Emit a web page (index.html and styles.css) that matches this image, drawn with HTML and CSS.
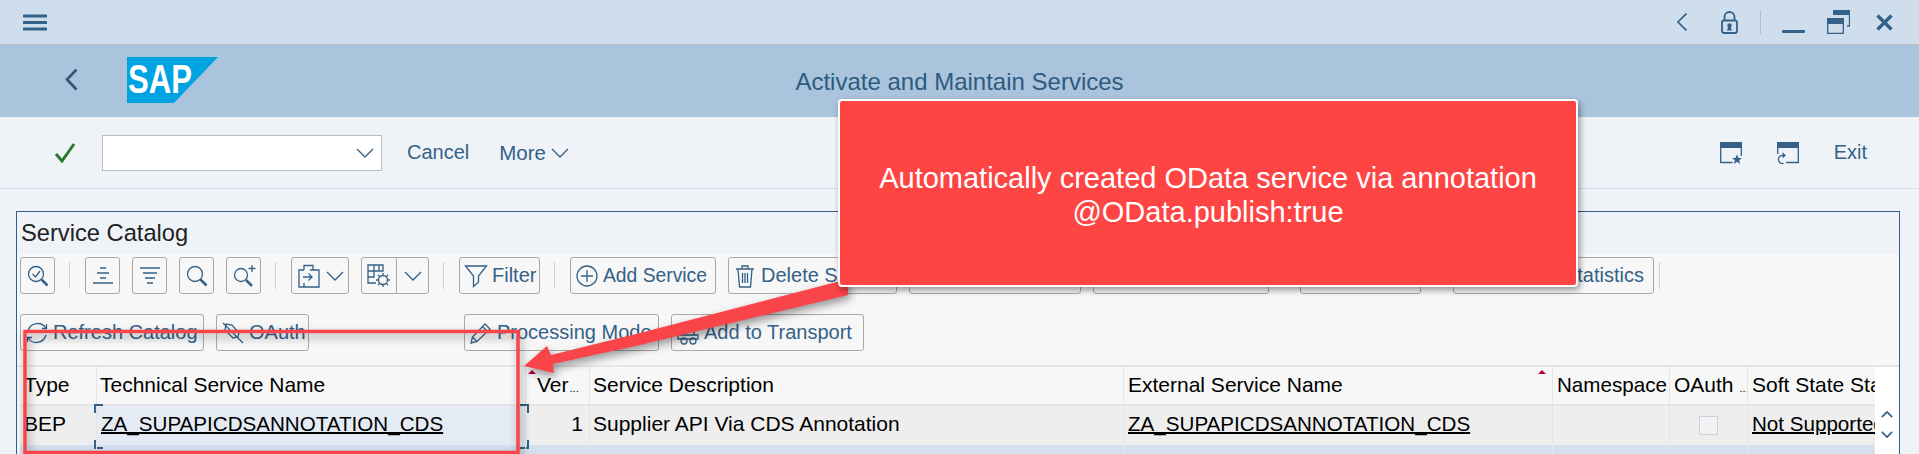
FILE: index.html
```html
<!DOCTYPE html>
<html lang="en">
<head>
    <meta charset="UTF-8">
    <title>Activate and Maintain Services</title>
    <link rel="stylesheet" href="styles.css">
</head>
<body>
    <div class="topbar">
        <svg class="ic-menu" viewBox="0 0 24 17"><path d="M1 2h22M1 8.500h22M1 15h22"/></svg>
        <div class="topbar-right">
            <svg class="ic-top-back" viewBox="0 0 10 18"><path d="M9.500 .5 1 9l8.500 8.500"/></svg>
            <svg class="ic-lock" viewBox="0 0 17 23"><path class="ln" d="M3.500 9.500V6a5 5 0 0 1 10 0v3.500"/><rect class="ln" x="1" y="9.500" width="15" height="12.500" rx="2"/><circle class="fl" cx="8.500" cy="14.500" r="2.200"/><path class="fl" d="M6 19.500h5l-1.500-4h-2z"/></svg>
            <span class="top-sep"></span>
            <svg class="ic-min" viewBox="0 0 23 3"><rect width="23" height="3" rx="1"/></svg>
            <svg class="ic-restore" viewBox="0 0 23 24"><path class="fl" d="M6 0h17v5H6z"/><path class="ln" d="M22.500 4v12H20"/><path class="fl" d="M0 8h17v6H0z"/><path class="ln" d="M.7 13v10.300h15.600V13"/></svg>
            <svg class="ic-close" viewBox="0 0 17 17"><path d="M1.500 1.500l14 14M15.500 1.500l-14 14"/></svg>
        </div>
    </div>

    <header class="titlebar">
        <div class="title-left">
            <svg class="ic-back" viewBox="0 0 13 23"><path d="M11.500 1.500 2 11.500l9.500 10"/></svg>
            <svg class="sap-logo" viewBox="0 0 91 46">
                <polygon points="0,0 91,0 47,46 0,46"/>
                <text x="1" y="36" textLength="64" lengthAdjust="spacingAndGlyphs">SAP</text>
            </svg>
        </div>
        <h1>Activate and Maintain Services</h1>
    </header>

    <div class="cmdbar">
        <svg class="ic-check" viewBox="0 0 22 20"><path d="M2 11l6 7L20 1"/></svg>
        <div class="combo">
            <svg class="chev" viewBox="0 0 18 10"><path d="M1 1l8 8 8-8"/></svg>
        </div>
        <a class="cmd cmd-cancel">Cancel</a>
        <a class="cmd cmd-more">More<svg class="chev" viewBox="0 0 18 10"><path d="M1 1l8 8 8-8"/></svg></a>
        <div class="cmdbar-right">
            <svg class="ic-win" viewBox="0 0 22 22"><path class="fl" d="M0 0h22v6H0z"/><path class="ln" d="M.7 5v15.500h12M21.300 5v9"/><path class="fl" d="M17 12.500l1.500 3.500h3.500l-2.800 2.300 1 3.700-3.200-2.200-3.200 2.200 1-3.700-2.800-2.300h3.500z"/></svg>
            <svg class="ic-win" viewBox="0 0 22 22"><path class="fl" d="M0 0h22v6H0z"/><path class="ln" d="M.7 5v7M21.300 5v15.500H9"/><path class="ln" d="M6.500 21.300A4 4 0 1 1 6 13.500h2M5.500 11l2.500 2.500-2.500 2"/></svg>
            <a class="cmd">Exit</a>
        </div>
    </div>

    <section class="panel">
        <div class="panel-title">Service Catalog</div>
        <div class="tools">
            <div class="tool-row">
                <button class="btn btn-ic"><svg viewBox="0 0 24 24"><circle cx="10" cy="10" r="7.500"/><path d="M6.500 10l3 3 4.500-6"/><path class="thick" d="M15.500 15.500l6 6"/></svg></button>
                <span class="sep"></span>
                <button class="btn btn-ic"><svg viewBox="0 0 24 24"><path d="M9 4h6M6 9h12M9 14h6M2 19h20"/></svg></button>
                <button class="btn btn-ic"><svg viewBox="0 0 24 24"><path d="M2 4h20M5 9h14M7 14h10M9 19h6"/></svg></button>
                <button class="btn btn-ic"><svg viewBox="0 0 24 24"><circle cx="10" cy="10" r="7.500"/><path class="thick" d="M15.500 15.500l6 6"/></svg></button>
                <button class="btn btn-ic"><svg viewBox="0 0 24 24"><circle cx="9" cy="11" r="6.500"/><path class="thick" d="M14 16l6 6"/><path d="M20 1v7M16.500 4.500h7"/></svg></button>
                <span class="sep"></span>
                <button class="btn btn-export"><svg viewBox="0 0 24 24"><path d="M7 6V1.500h9V6M7 19v4M7 6H2v17h5M13 6h9v17H7"/><path d="M6 13h9M11.500 9.500l3.500 3.500-3.500 3.500"/></svg><svg class="chev" viewBox="0 0 18 10"><path d="M1 1l8 8 8-8"/></svg></button>
                <div class="btn btn-split">
                    <span class="split-l"><svg viewBox="0 0 24 24"><path d="M1 1h15v6H1zM1 7h6v6H1zM7 1v6M12 1v6M1 13v6h8"/><circle cx="16" cy="16" r="4.500"/><path d="M16 9v2.500M16 20.500V23M9 16h2.500M20.500 16H23M11 11l1.800 1.800M19.200 19.200l1.800 1.800M11 21l1.800-1.800M19.200 12.800L21 11"/></svg></span>
                    <span class="split-r"><svg class="chev" viewBox="0 0 18 10"><path d="M1 1l8 8 8-8"/></svg></span>
                </div>
                <span class="sep"></span>
                <button class="btn btn-filter"><svg viewBox="0 0 24 24"><path d="M1.500 2h21l-8 10v6l-5 4.500V12z"/></svg>Filter</button>
                <span class="sep"></span>
                <button class="btn btn-add"><svg viewBox="0 0 24 24"><circle cx="12" cy="12" r="10"/><path d="M12 6v12M6 12h12"/></svg>Add Service</button>
                <button class="btn btn-delete"><svg viewBox="0 0 24 24"><path d="M3 5h18M9 5V2h6v3M5 5l1.500 18h11L19 5M9.500 9v10M12 9v10M14.500 9v10"/></svg>Delete Service</button>
                <button class="btn btn-w172"></button>
                <button class="btn btn-w176"></button>
                <button class="btn btn-w121"></button>
                <button class="btn btn-stats">Gateway Statistics</button>
                <span class="sep sep-tight"></span>
            </div>
            <div class="tool-row">
                <button class="btn btn-refresh"><svg viewBox="0 0 24 24"><path d="M3 10A10 10 0 0 1 21 7M21 14A10 10 0 0 1 3 17M17 7.500h4.500V3M7 16.500H2.500V21"/></svg>Refresh Catalog</button>
                <button class="btn btn-oauth"><svg viewBox="0 0 24 24"><path d="M2 2l20 20"/><path d="M5 3l-1 6 8 8 5-1 1-4-7-8z"/></svg>OAuth</button>
                <button class="btn btn-proc"><svg viewBox="0 0 24 24"><path d="M2 22l1.500-6L16 3l5 5L8 20.500zM3.500 16l4.500 4.500M13.500 5.500l5 5"/></svg>Processing Mode</button>
                <button class="btn btn-transport"><svg viewBox="0 0 24 24"><path d="M6 8h12v6H6zM2 14h20v4H2zM6 8l2-5h8l2 5"/><circle cx="8" cy="20" r="3"/><circle cx="17" cy="20" r="3"/></svg>Add to Transport</button>
            </div>
        </div>

        <div class="grid">
            <div class="row row-head">
                <div class="cell">Type</div>
                <div class="cell cell-tech">Technical Service Name</div>
                <div class="cell cell-ver">Ver<span class="dots">...</span><i class="sort sort-a"></i></div>
                <div class="cell cell-desc">Service Description</div>
                <div class="cell cell-ext">External Service Name<i class="sort sort-b"></i></div>
                <div class="cell cell-ns">Namespace</div>
                <div class="cell cell-oauth">OAuth<span class="dots">...</span></div>
                <div class="cell cell-soft">Soft State Status</div>
            </div>
            <div class="row row-data">
                <div class="cell">BEP</div>
                <div class="cell cell-focus"><a class="link">ZA_SUPAPICDSANNOTATION_CDS</a><i class="br br-tl"></i><i class="br br-tr"></i><i class="br br-bl"></i><i class="br br-br"></i></div>
                <div class="cell cell-num">1</div>
                <div class="cell cell-desc">Supplier API Via CDS Annotation</div>
                <div class="cell cell-ext"><a class="link">ZA_SUPAPICDSANNOTATION_CDS</a></div>
                <div class="cell"></div>
                <div class="cell cell-chk"><span class="chk"></span></div>
                <div class="cell cell-soft"><a class="link">Not Supported</a></div>
            </div>
            <div class="row row-sel">
                <div class="cell"></div><div class="cell"></div><div class="cell"></div><div class="cell"></div>
                <div class="cell"></div><div class="cell"></div><div class="cell"></div><div class="cell"></div>
            </div>
            <div class="vscroll">
                <svg viewBox="0 0 14 8"><path d="M1 7l6-6 6 6"/></svg>
                <svg viewBox="0 0 14 8"><path d="M1 1l6 6 6-6"/></svg>
            </div>
        </div>
    </section>

    <!-- callout drawn over the screen -->
    <svg class="markup" viewBox="0 0 1919 454">
        <rect x="25" y="331.500" width="493" height="121" />
        <polygon points="524,366 547,346 551,355 640,333 848,279 848,295 640,345 553,364 554,373"/>
    </svg>
    <div class="callout">Automatically created OData service via annotation<br>@OData.publish:true</div>
</body>
</html>
```

FILE: styles.css
```css
html, body {
    margin: 0;
    padding: 0;
    height: 454px;
    overflow: hidden;
}

body {
    position: relative;
    font-family: "Liberation Sans", Arial, sans-serif;
    font-size: 20px;
    color: #000;
    background: #eff3f8;
}

svg {
    display: block;
    flex: none;
    fill: none;
    stroke: #346187;
    stroke-width: 1.3;
}

svg .fl {
    fill: #346187;
    stroke: none;
}

svg .ln {
    fill: none;
}

svg .thick {
    stroke-width: 2.5;
}

.chev {
    width: 18px;
    height: 10px;
}

/* top window bar */
.topbar {
    height: 44px;
    background: #cfdeec;
    border-bottom: 1px solid #b9bfc4;
    display: flex;
    align-items: center;
    padding: 0 26px 0 23px;
}

.ic-menu {
    width: 24px;
    height: 17px;
    stroke-width: 3;
    stroke-linecap: round;
}

.topbar-right {
    margin-left: auto;
    display: flex;
    align-items: center;
}

.ic-top-back {
    width: 10px;
    height: 18px;
    margin-right: 34px;
    stroke-width: 1.6;
}

.ic-lock {
    width: 17px;
    height: 23px;
    margin-right: 22px;
    stroke-width: 1.8;
}

.top-sep {
    width: 1px;
    height: 24px;
    background: #b5bec6;
    margin-right: 21px;
}

.ic-min {
    width: 23px;
    height: 3px;
    margin: 18px 22px 0 0;
    fill: #346187;
    stroke: none;
}

.ic-restore {
    width: 23px;
    height: 24px;
    margin-right: 26px;
}

.ic-close {
    width: 17px;
    height: 17px;
    stroke-width: 3.4;
}

/* title band */
.titlebar {
    height: 72px;
    background: #a9c4dc;
    display: grid;
    grid-template-columns: 1fr auto 1fr;
    align-items: center;
}

.title-left {
    display: flex;
    align-items: center;
    padding-left: 65px;
}

.ic-back {
    width: 13px;
    height: 23px;
    margin: -4px 49px 0 0;
    stroke: #2f5577;
    stroke-width: 2.6;
}

.sap-logo {
    width: 91px;
    height: 46px;
    margin-top: -3px;
    stroke: none;
}

.sap-logo polygon {
    fill: #00a3e2;
}

.sap-logo text {
    fill: #fff;
    font-size: 40px;
    font-weight: bold;
}

.titlebar h1 {
    margin: 0;
    padding-top: 1px;
    font-size: 24px;
    font-weight: normal;
    color: #2e5a80;
}

/* command bar */
.cmdbar {
    height: 71px;
    border-bottom: 1px solid #cfe0f0;
    display: flex;
    align-items: center;
    padding: 0 52px 0 54px;
    color: #346187;
}

.ic-check {
    width: 22px;
    height: 20px;
    margin-right: 26px;
    stroke: #2a7a2e;
    stroke-width: 3;
}

.combo {
    width: 271px;
    height: 34px;
    background: #fff;
    border: 1px solid #b9bfc4;
    display: flex;
    align-items: center;
    justify-content: flex-end;
    padding-right: 7px;
    margin-right: 25px;
}

.cmd {
    color: #346187;
    white-space: nowrap;
}

.cmd-cancel {
    margin-right: 30px;
}

.cmd-more {
    display: flex;
    align-items: center;
    gap: 5px;
    font-size: 20.5px;
}

.cmdbar-right {
    margin-left: auto;
    display: flex;
    align-items: center;
    gap: 35px;
}

.ic-win {
    width: 22px;
    height: 22px;
}

/* service catalog panel */
.panel {
    margin: 22px 19px 0 16px;
    border: 1px solid #2f5f8f;
    border-bottom: 0;
    height: 243px;
    overflow: hidden;
}

.panel-title {
    height: 42px;
    line-height: 42px;
    padding-left: 4px;
    font-size: 23.7px;
    color: #222;
}

.tools {
    height: 111px;
    box-sizing: border-box;
    background: #f7f7f7;
    padding: 3px 0 0 3px;
}

.tool-row {
    display: flex;
    align-items: center;
    gap: 12px;
    height: 37px;
    margin-bottom: 20px;
}

.btn {
    height: 37px;
    box-sizing: border-box;
    display: flex;
    align-items: center;
    gap: 4px;
    padding: 0 4px;
    background: transparent;
    border: 1px solid #a9a9a9;
    border-radius: 3px;
    font-family: inherit;
    font-size: 20px;
    color: #346187;
    white-space: nowrap;
    flex: none;
}

.btn svg:not(.chev) {
    width: 24px;
    height: 24px;
}

.btn-ic {
    width: 35px;
    justify-content: center;
    padding: 0;
}

.btn-export {
    width: 58px;
    gap: 5px;
    padding: 0 5px;
}

.btn-split {
    width: 68px;
    padding: 0;
    gap: 0;
}

.split-l {
    width: 34px;
    height: 100%;
    display: flex;
    align-items: center;
    justify-content: center;
    border-right: 1px solid #a9a9a9;
}

.split-r {
    flex: 1;
    display: flex;
    justify-content: center;
}

.sep {
    width: 1px;
    height: 27px;
    background: #cfcfcf;
    margin: 0 3px 0 2px;
}

.sep-tight {
    margin-left: -7px;
}

.btn-filter { width: 81px; }
.btn-add { width: 146px; font-size: 19.3px; }
.btn-delete { width: 169px; }
.btn-w172 { width: 172px; }
.btn-w176 { width: 176px; margin-right: 19px; }
.btn-w121 { width: 121px; margin-right: 20px; }

.btn-stats {
    width: 201px;
    justify-content: flex-end;
    padding-right: 9px;
}

.btn-refresh { width: 184px; }
.btn-oauth { width: 93px; }
.btn-proc { width: 195px; margin-left: 143px; }
.btn-transport { width: 193px; }

/* table */
.grid {
    position: relative;
    padding-left: 3px;
    border-top: 2px solid #e5e5e5;
    background: #f7f7f7;
}

.row {
    display: grid;
    grid-template-columns: 77px 429px 64px 534px 429px 117px 78px 127px;
    width: 1855px;
    font-size: 21px;
}

.row-head {
    height: 37px;
    border-bottom: 2px solid #e5e5e5;
    line-height: 36px;
}

.row-data {
    height: 39px;
    line-height: 36px;
    background: #eee;
}

.row-sel {
    height: 39px;
    background: #d4e0ef;
}

.cell {
    position: relative;
    padding-left: 4px;
    border-right: 1px solid #e5e5e5;
    white-space: nowrap;
    overflow: hidden;
    min-width: 0;
}

.cell-tech {
    padding-left: 3px;
}

.cell-focus {
    background: #e4ebf5;
    overflow: visible;
}

.cell-ver {
    padding-left: 11px;
    overflow: visible;
}

.cell-num {
    text-align: right;
    padding-right: 6px;
}

.cell-desc {
    padding-left: 3px;
}

.cell-ext {
    overflow: visible;
}

.cell-ns {
    font-size: 20.6px;
}

.cell-soft {
    border-right: 0;
}

.dots {
    font-size: 11px;
    margin-left: 1px;
}

.cell-oauth .dots {
    margin-left: 6px;
}

.link {
    color: #000;
    font-size: 20.6px;
    text-decoration: underline;
    text-decoration-thickness: 2px;
}

.sort {
    position: absolute;
    top: 3px;
    width: 0;
    height: 0;
    border-left: 4px solid transparent;
    border-right: 4px solid transparent;
    border-bottom: 4px solid #b8003a;
}

.sort-a {
    left: 2px;
}

.sort-b {
    right: 6px;
}

.br {
    position: absolute;
    width: 7px;
    height: 7px;
    border: 0 solid #346187;
}

.br-tl { left: -3px; top: -2px; border-width: 2px 0 0 2px; }
.br-tr { right: -4px; top: -2px; border-width: 2px 2px 0 0; }
.br-bl { left: -3px; bottom: -4px; border-width: 0 0 2px 2px; }
.br-br { right: -4px; bottom: -4px; border-width: 0 2px 2px 0; }

.cell-chk {
    display: flex;
    align-items: center;
    justify-content: center;
    padding: 0;
}

.chk {
    width: 17px;
    height: 17px;
    background: #f2f2f2;
    border: 1px solid #c5d3e0;
}

.vscroll {
    position: absolute;
    top: 0;
    right: 0;
    bottom: 0;
    width: 24px;
    background: #fff;
    display: flex;
    flex-direction: column;
    align-items: center;
    gap: 13px;
    padding-top: 44px;
    box-sizing: border-box;
}

.vscroll svg {
    width: 12px;
    height: 7px;
    stroke-width: 2;
}

/* annotation layer */
.markup {
    position: absolute;
    left: 0;
    top: 0;
    width: 1919px;
    height: 454px;
    stroke: none;
    filter: drop-shadow(2px 4px 4px rgba(0, 0, 0, .4));
}

.markup rect {
    fill: none;
    stroke: #f9444a;
    stroke-width: 3.5;
}

.markup polygon {
    fill: #f9444a;
}

.callout {
    position: absolute;
    left: 838px;
    top: 99px;
    width: 740px;
    height: 188px;
    box-sizing: border-box;
    background: #ff4444;
    border: 2px solid #fff;
    border-radius: 4px;
    box-shadow: 2px 3px 6px rgba(0, 0, 0, .4);
    color: #fff;
    font-size: 29px;
    line-height: 34px;
    text-align: center;
    padding-top: 60px;
}
```
